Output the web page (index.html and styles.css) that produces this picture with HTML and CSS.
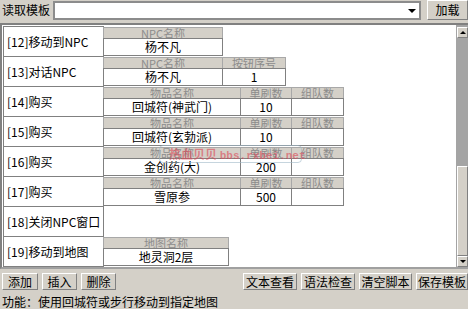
FILE: index.html
```html
<!DOCTYPE html>
<html lang="zh-CN">
<head>
  <meta charset="UTF-8">
  <title>脚本编辑</title>
  <link rel="stylesheet" href="styles.css">
</head>
<body>

  <div class="topbar">
    <span class="label">读取模板</span>
    <div class="combo"><span class="arrow"></span></div>
    <button class="btn load">加载</button>
  </div>

  <div class="panel">
    <div class="list">
      <div class="row">
        <div class="name">[12]移动到NPC</div>
        <div class="fields">
          <div class="field w-npc"><div class="head">NPC名称</div><div class="val">杨不凡</div></div>
        </div>
      </div>
      <div class="row">
        <div class="name">[13]对话NPC</div>
        <div class="fields">
          <div class="field w-npc"><div class="head">NPC名称</div><div class="val">杨不凡</div></div>
          <div class="field w-btn"><div class="head">按钮序号</div><div class="val">1</div></div>
        </div>
      </div>
      <div class="row">
        <div class="name">[14]购买</div>
        <div class="fields">
          <div class="field w-item"><div class="head">物品名称</div><div class="val">回城符(神武门)</div></div>
          <div class="field w-num"><div class="head">单刷数</div><div class="val">10</div></div>
          <div class="field w-team"><div class="head">组队数</div><div class="val"></div></div>
        </div>
      </div>
      <div class="row">
        <div class="name">[15]购买</div>
        <div class="fields">
          <div class="field w-item"><div class="head">物品名称</div><div class="val">回城符(玄勃派)</div></div>
          <div class="field w-num"><div class="head">单刷数</div><div class="val">10</div></div>
          <div class="field w-team"><div class="head">组队数</div><div class="val"></div></div>
        </div>
      </div>
      <div class="row">
        <div class="name">[16]购买</div>
        <div class="fields">
          <div class="field w-item"><div class="head">物品名称</div><div class="val">金创药(大)</div></div>
          <div class="field w-num"><div class="head">单刷数</div><div class="val">200</div></div>
          <div class="field w-team"><div class="head">组队数</div><div class="val"></div></div>
        </div>
      </div>
      <div class="row">
        <div class="name">[17]购买</div>
        <div class="fields">
          <div class="field w-item"><div class="head">物品名称</div><div class="val">雪原参</div></div>
          <div class="field w-num"><div class="head">单刷数</div><div class="val">500</div></div>
          <div class="field w-team"><div class="head">组队数</div><div class="val"></div></div>
        </div>
      </div>
      <div class="row">
        <div class="name">[18]关闭NPC窗口</div>
      </div>
      <div class="row">
        <div class="name">[19]移动到地图</div>
        <div class="fields">
          <div class="field w-map"><div class="head">地图名称</div><div class="val">地灵洞2层</div></div>
        </div>
      </div>

      <!-- watermark over row 16 -->
      <div class="mark">热血贝贝 <span class="mark-url">bbs.rxbei.net</span></div>
    </div>

    <div class="scroll">
      <div class="sbtn"><span class="tri up"></span></div>
      <div class="track"></div>
      <div class="thumb"></div>
      <div class="sbtn"><span class="tri down"></span></div>
    </div>
  </div>

  <div class="toolbar">
    <button class="btn w36">添加</button>
    <button class="btn w35">插入</button>
    <button class="btn w35">删除</button>
    <div class="spacer"></div>
    <button class="btn w54">文本查看</button>
    <button class="btn w54">语法检查</button>
    <button class="btn w53">清空脚本</button>
    <button class="btn w52">保存模板</button>
  </div>

  <div class="status">功能：使用回城符或步行移动到指定地图</div>

</body>
</html>
```

FILE: styles.css
```css
* {
  box-sizing: border-box;
}
body {
  margin: 0;
  width: 468px;
  height: 309px;
  overflow: hidden;
  background-color: #d4d0c8;
  font-family: "Noto Sans CJK SC", sans-serif;
  font-size: 12px;
  color: #000;
}
.btn {
  background-color: #d4d0c8;
  border: 1px solid;
  border-color: #fff #808080 #808080 #fff;
  font: inherit;
  color: #000;
  padding: 0;
  height: 17px;
  line-height: 15px;
}

/* top bar */
.topbar {
  display: flex;
  align-items: flex-start;
  height: 23px;
  padding: 1px 0 0 2px;
}
.label {
  width: 51px;
  line-height: 18px;
}
.combo {
  width: 368px;
  height: 19px;
  border: 2px solid #8c8c8c;
  background-color: #fff;
  display: flex;
  justify-content: flex-end;
  align-items: center;
  padding-right: 3px;
}
.arrow {
  width: 0;
  height: 0;
  border-left: 4px solid transparent;
  border-right: 4px solid transparent;
  border-top: 4px solid #000;
}
.load {
  width: 41px;
  height: 20px;
  margin: -1px 0 0 6px;
  line-height: 18px;
}

/* script panel */
.panel {
  display: flex;
  height: 246px;
  border-top: 2px solid #808080;
  border-left: 2px solid #808080;
  border-bottom: 2px solid #a0a0a0;
  background-color: #fff;
}
.list {
  flex: 1;
  position: relative;
  padding: 1px 0 0 1px;
}
.row {
  display: flex;
  align-items: flex-start;
}
.name {
  width: 101px;
  height: 30px;
  border: 1px solid #808080;
  border-top: none;
  padding-left: 3px;
  display: flex;
  align-items: center;
  white-space: nowrap;
}
.row:first-child .name {
  height: 31px;
  border-top: 1px solid #808080;
}
.fields {
  display: flex;
  margin-left: -1px;
}
.row:first-child .fields {
  padding-top: 1px;
}
.field {
  display: flex;
  flex-direction: column;
}
.field + .field {
  margin-left: -1px;
}
.head {
  height: 11px;
  background-color: #d4d0c8;
  border: 1px solid #a8a8a8;
  border-bottom: none;
  color: #8c8c8c;
  text-align: center;
  font-size: 11px;
  line-height: 10px;
  overflow: hidden;
}
.val {
  height: 18px;
  border: 1px solid #808080;
  text-align: center;
  line-height: 16px;
  white-space: nowrap;
}
.w-npc { width: 120px; }
.w-btn { width: 64px; }
.w-item { width: 138px; }
.w-num { width: 52px; }
.w-team { width: 53px; }
.w-map { width: 126px; }

.mark {
  position: absolute;
  left: 157px;
  top: 120px;
  width: 143px;
  height: 18px;
  border: 1px solid rgba(160, 185, 200, 0.6);
  border-radius: 4px;
  padding-left: 9px;
  line-height: 16px;
  font-size: 12px;
  font-weight: bold;
  color: rgba(220, 70, 85, 0.6);
  white-space: nowrap;
}
.mark-url {
  font-family: "Liberation Mono", monospace;
  font-size: 11px;
}

/* scrollbar */
.scroll {
  width: 12px;
  background-color: #a4a4a4;
  display: flex;
  flex-direction: column;
  padding: 2px 0 0 1px;
}
.sbtn {
  width: 11px;
  height: 11px;
  background-color: #d4d0c8;
  border: 1px solid;
  border-color: #fff #808080 #808080 #fff;
  display: flex;
  align-items: center;
  justify-content: center;
}
.tri {
  width: 0;
  height: 0;
  border-left: 3px solid transparent;
  border-right: 3px solid transparent;
}
.tri.up {
  border-bottom: 3px solid #000;
}
.tri.down {
  border-top: 3px solid #000;
}
.track {
  flex: 1;
}
.thumb {
  width: 11px;
  height: 90px;
  background-color: #d4d0c8;
  border: 1px solid;
  border-color: #fff #808080 #808080 #fff;
}

/* bottom */
.toolbar {
  display: flex;
  gap: 4px;
  padding: 4px 0 0 2px;
}
.spacer {
  flex: 1;
}
.w36 { width: 36px; }
.w35 { width: 35px; }
.w54 { width: 54px; }
.w53 { width: 53px; }
.w52 { width: 52px; }
.status {
  margin-top: 5px;
  padding-left: 2px;
  line-height: 14px;
}
```
